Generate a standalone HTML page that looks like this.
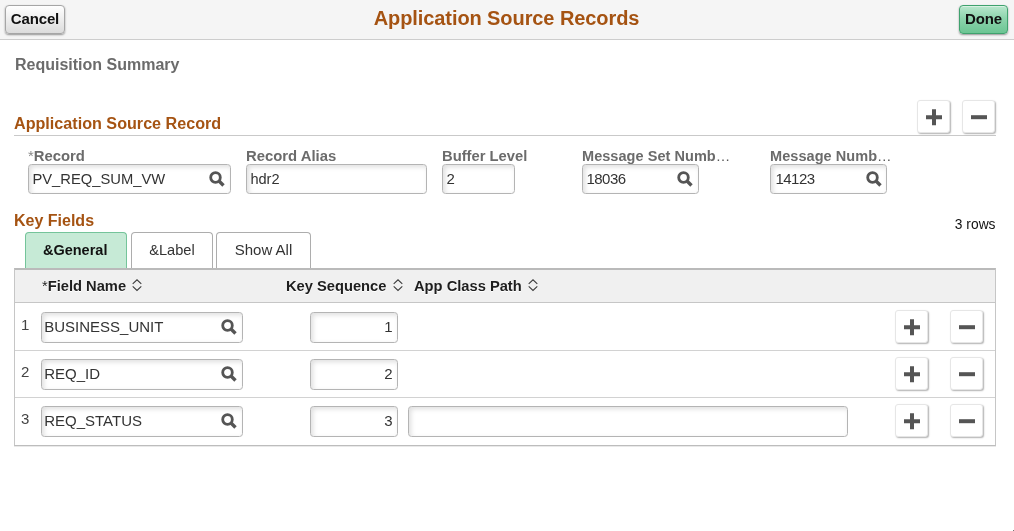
<!DOCTYPE html>
<html><head><meta charset="utf-8"><title>Application Source Records</title>
<style>
html,body{margin:0;padding:0;}
body{width:1014px;height:531px;position:relative;overflow:hidden;background:#fff;font-family:"Liberation Sans",Arial,sans-serif;color:#333;}
.abs{position:absolute;}
#hdr{left:0;top:0;width:1014px;height:39px;background:#f5f5f5;border-bottom:1px solid #cdcdcd;}
#title{left:0;top:0;width:1013px;height:39px;line-height:37px;text-align:center;font-weight:bold;font-size:20px;letter-spacing:-0.085px;color:#a55312;white-space:nowrap;}
.btn{box-sizing:border-box;border:1px solid #a6a6a6;border-radius:4px;background:linear-gradient(#ffffff,#dcdcdc);box-shadow:0 1px 2px rgba(0,0,0,.4);font-weight:bold;font-size:15px;letter-spacing:-0.15px;color:#111;text-align:center;line-height:26px;}
.btn.green{background:linear-gradient(#b9e7cd,#8dd4ad 45%,#6cc593);border-color:#3fa26e;box-shadow:0 1px 2px rgba(0,0,0,.4),inset 0 1px 0 rgba(255,255,255,.45);}
.sec{font-weight:bold;font-size:16px;color:#a55312;white-space:nowrap;}
.lbl{font-weight:bold;font-size:14.5px;color:#6b6b6b;white-space:nowrap;}
.lbl i{font-style:normal;font-weight:normal;color:#888;}
.lbl b{font-weight:normal;color:#555;}
.inp{box-sizing:border-box;border:1px solid #b4b4b4;border-radius:3.5px;background:#fff;box-shadow:inset 2px 2px 5px rgba(0,0,0,.13);font-size:15px;color:#333;padding-left:3.4px;white-space:nowrap;height:30px;line-height:28.6px;}
.inp.r{height:31px;line-height:27.6px;padding-left:2.2px;}
.inp.n{text-align:right;padding-right:4.5px;}
.inp svg{position:absolute;right:5px;top:5.8px;}
.inp.r svg{top:6.3px;right:5.5px;}
.sq{box-sizing:border-box;width:33px;height:33px;border:1px solid #e6e6e6;border-radius:3px;background:#fff;box-shadow:1px 1px 1.5px rgba(0,0,0,.3);}
.sq svg{position:absolute;left:0;top:0;}
.tab{box-sizing:border-box;height:37px;border:1px solid #adadad;border-bottom:none;border-radius:4px 4px 0 0;background:#fff;font-size:15px;color:#333;text-align:center;line-height:34px;white-space:nowrap;}
.tab.on{padding-right:1.6px;background:#c6ead6;border-color:#74c49a;font-weight:bold;color:#111;font-size:14.5px;}
.th{font-weight:bold;font-size:14.7px;color:#1e1e1e;white-space:nowrap;text-shadow:0 1px 0 #fff;}
.th i{font-style:normal;font-weight:normal;}
.num{font-size:15px;color:#444;margin-top:-0.5px;}
.sort{position:absolute;top:278px;}
</style></head><body><div style="position:absolute;left:0;top:0;width:1014px;height:531px;will-change:transform;">
<div id="hdr" class="abs"></div>
<div id="title" class="abs">Application Source Records</div>
<div class="abs btn" style="left:5px;top:5px;width:60px;height:29px;">Cancel</div>
<div class="abs btn green" style="left:959px;top:5px;width:49px;height:29px;">Done</div>

<div class="abs" style="left:15px;top:56px;font-weight:bold;font-size:16px;color:#6b6b6b;white-space:nowrap;">Requisition Summary</div>

<div class="abs sec" style="left:14px;top:114px;font-size:16.15px;">Application Source Record</div>
<div class="abs" style="left:14px;top:135px;width:982px;height:1px;background:#c9c9c9;"></div>
<div class="abs sq" style="left:917px;top:100px;"><svg width="32" height="31" viewBox="0 0 32 31"><path d="M8 14.2h16v4h-16zM14 8.2h4v16h-4z" fill="#555"/></svg></div>
<div class="abs sq" style="left:962px;top:100px;"><svg width="32" height="31" viewBox="0 0 32 31"><path d="M8 14.2h16v4h-16z" fill="#555"/></svg></div>

<div class="abs lbl" style="left:28px;top:148px;font-size:14.85px;"><i>*</i>Record</div>
<div class="abs lbl" style="left:246px;top:148px;font-size:14.85px;">Record Alias</div>
<div class="abs lbl" style="left:442px;top:148px;font-size:14.75px;">Buffer Level</div>
<div class="abs lbl" style="left:582px;top:148px;letter-spacing:0.05px;">Message Set Numb<b>…</b></div>
<div class="abs lbl" style="left:770px;top:148px;letter-spacing:0.06px;">Message Numb<b>…</b></div>

<div class="abs inp" style="left:28px;top:164px;width:203px;font-size:14.75px;">PV_REQ_SUM_VW<svg width="16" height="16" viewBox="0 0 16 16"><circle cx="6.5" cy="6.5" r="4.8" stroke="#555" stroke-width="2.8" fill="none"/><path d="M10 10L14.5 14.5" stroke="#555" stroke-width="3.3" fill="none"/></svg></div>
<div class="abs inp" style="left:246px;top:164px;width:181px;font-size:14.6px;">hdr2</div>
<div class="abs inp" style="left:442px;top:164px;width:73px;">2</div>
<div class="abs inp" style="left:582px;top:164px;width:117px;letter-spacing:-0.5px;">18036<svg width="16" height="16" viewBox="0 0 16 16"><circle cx="6.5" cy="6.5" r="4.8" stroke="#555" stroke-width="2.8" fill="none"/><path d="M10 10L14.5 14.5" stroke="#555" stroke-width="3.3" fill="none"/></svg></div>
<div class="abs inp" style="left:770px;top:164px;width:117px;letter-spacing:-0.5px;padding-left:4.4px;">14123<svg style="right:4px" width="16" height="16" viewBox="0 0 16 16"><circle cx="6.5" cy="6.5" r="4.8" stroke="#555" stroke-width="2.8" fill="none"/><path d="M10 10L14.5 14.5" stroke="#555" stroke-width="3.3" fill="none"/></svg></div>

<div class="abs sec" style="left:14px;top:212px;">Key Fields</div>
<div class="abs" style="left:900px;top:217px;width:95.5px;text-align:right;font-size:13.8px;color:#111;">3 rows</div>

<div class="abs tab on" style="left:25px;top:232px;width:102px;">&amp;General</div>
<div class="abs tab" style="left:131px;top:232px;width:82px;font-size:14.6px;">&amp;Label</div>
<div class="abs tab" style="left:216px;top:232px;width:95px;">Show All</div>

<div class="abs" style="left:14px;top:268px;width:982px;height:178px;box-sizing:border-box;border:1px solid #c6c6c6;border-top:2px solid #bababa;border-bottom-color:#bdbdbd;box-shadow:0 1px 0 #e9e9e9;"></div>
<div class="abs" style="left:15px;top:270px;width:980px;height:32px;background:#f0f0f0;border-bottom:1px solid #c6c6c6;"></div>
<div class="abs th" style="left:42px;top:278px;"><i>*</i>Field Name</div>
<div class="abs th" style="left:286px;top:278px;">Key Sequence</div>
<div class="abs th" style="left:414px;top:278px;">App Class Path</div>
<svg class="sort" style="left:131px" width="12" height="14" viewBox="0 0 12 14"><path d="M1.7 5.9L6 1.8L10.3 5.9M1.7 8.3L6 12.4L10.3 8.3" stroke="#3a3a3a" stroke-width="1.05" fill="none"/></svg>
<svg class="sort" style="left:392px" width="12" height="14" viewBox="0 0 12 14"><path d="M1.7 5.9L6 1.8L10.3 5.9M1.7 8.3L6 12.4L10.3 8.3" stroke="#3a3a3a" stroke-width="1.05" fill="none"/></svg>
<svg class="sort" style="left:527px" width="12" height="14" viewBox="0 0 12 14"><path d="M1.7 5.9L6 1.8L10.3 5.9M1.7 8.3L6 12.4L10.3 8.3" stroke="#3a3a3a" stroke-width="1.05" fill="none"/></svg>

<div class="abs" style="left:15px;top:350px;width:980px;height:1px;background:#d2d2d2;"></div>
<div class="abs" style="left:15px;top:397px;width:980px;height:1px;background:#d2d2d2;"></div>

<div class="abs num" style="left:21px;top:316px;">1</div>
<div class="abs num" style="left:21px;top:363px;">2</div>
<div class="abs num" style="left:21px;top:410px;">3</div>

<div class="abs inp r" style="left:41px;top:312px;width:202px;">BUSINESS_UNIT<svg width="16" height="16" viewBox="0 0 16 16"><circle cx="6.5" cy="6.5" r="4.8" stroke="#555" stroke-width="2.8" fill="none"/><path d="M10 10L14.5 14.5" stroke="#555" stroke-width="3.3" fill="none"/></svg></div>
<div class="abs inp r" style="left:41px;top:359px;width:202px;">REQ_ID<svg width="16" height="16" viewBox="0 0 16 16"><circle cx="6.5" cy="6.5" r="4.8" stroke="#555" stroke-width="2.8" fill="none"/><path d="M10 10L14.5 14.5" stroke="#555" stroke-width="3.3" fill="none"/></svg></div>
<div class="abs inp r" style="left:41px;top:406px;width:202px;">REQ_STATUS<svg width="16" height="16" viewBox="0 0 16 16"><circle cx="6.5" cy="6.5" r="4.8" stroke="#555" stroke-width="2.8" fill="none"/><path d="M10 10L14.5 14.5" stroke="#555" stroke-width="3.3" fill="none"/></svg></div>

<div class="abs inp r n" style="left:310px;top:312px;width:88px;">1</div>
<div class="abs inp r n" style="left:310px;top:359px;width:88px;">2</div>
<div class="abs inp r n" style="left:310px;top:406px;width:88px;">3</div>
<div class="abs inp r" style="left:408px;top:406px;width:440px;"></div>

<div class="abs sq" style="left:895px;top:310px;"><svg width="32" height="31" viewBox="0 0 32 31"><path d="M8 14.2h16v4h-16zM14 8.2h4v16h-4z" fill="#555"/></svg></div>
<div class="abs sq" style="left:950px;top:310px;"><svg width="32" height="31" viewBox="0 0 32 31"><path d="M8 14.2h16v4h-16z" fill="#555"/></svg></div>
<div class="abs sq" style="left:895px;top:357px;"><svg width="32" height="31" viewBox="0 0 32 31"><path d="M8 14.2h16v4h-16zM14 8.2h4v16h-4z" fill="#555"/></svg></div>
<div class="abs sq" style="left:950px;top:357px;"><svg width="32" height="31" viewBox="0 0 32 31"><path d="M8 14.2h16v4h-16z" fill="#555"/></svg></div>
<div class="abs sq" style="left:895px;top:404px;"><svg width="32" height="31" viewBox="0 0 32 31"><path d="M8 14.2h16v4h-16zM14 8.2h4v16h-4z" fill="#555"/></svg></div>
<div class="abs sq" style="left:950px;top:404px;"><svg width="32" height="31" viewBox="0 0 32 31"><path d="M8 14.2h16v4h-16z" fill="#555"/></svg></div>

<div class="abs" style="left:1013px;top:530px;width:1px;height:1px;background:#777;"></div>
</div></body></html>
